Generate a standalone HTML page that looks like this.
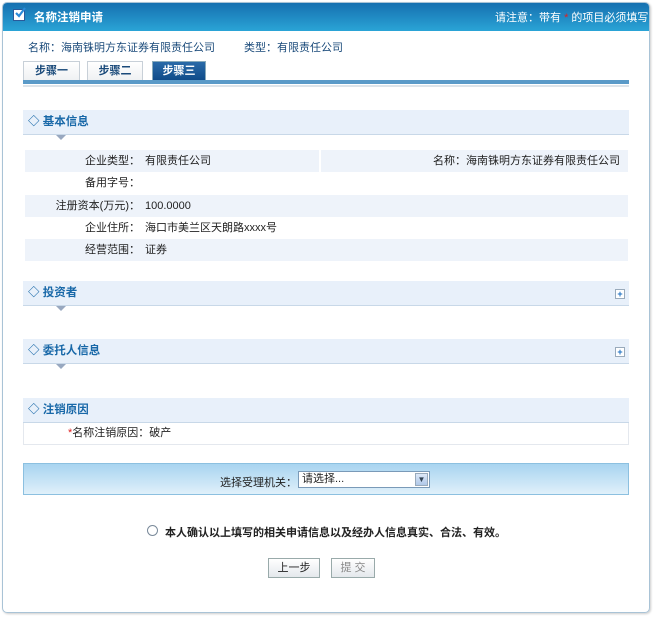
<!DOCTYPE html>
<html><head><meta charset="utf-8"><style>
*{margin:0;padding:0;box-sizing:border-box}
body{width:653px;height:618px;background:#fff;font-family:"Liberation Sans","Noto Sans CJK SC",sans-serif;font-size:11px;color:#222;position:relative;overflow:hidden}
.a{position:absolute}
.panel{left:2px;top:2px;width:648px;height:611px;border:1px solid #a9c3d6;border-radius:5px;box-shadow:1px 1px 2px #ccc}
.hdr{left:3px;top:3px;width:646px;height:28px;background:linear-gradient(#1670b0,#2aa4d6);border-radius:4px 4px 0 0}
.sec{left:23px;width:606px;height:25px;background:#e8f0fa;border-bottom:1px solid #c8d8e8;color:#1868a8;font-weight:bold;font-size:11.5px;line-height:24px;padding-left:5px}
.tri{width:0;height:0;border-left:5px solid transparent;border-right:5px solid transparent;border-top:5px solid #98a8c0}
.row{left:25px;width:603px;height:22px;line-height:22px}
.bg{background:#eef3fa}
.lab{position:absolute;right:488px;text-align:right;white-space:nowrap}
.val{position:absolute;left:120px}
.plus{width:10px;height:10px;border:1px solid #9ab;background:#fff;color:#1a6ec0;font-size:9px;line-height:8px;text-align:center;font-weight:bold}
.tab{top:61px;height:20px;border:1px solid #c8d0d8;border-bottom:none;background:linear-gradient(#fff,#eef0f2);text-align:center;line-height:19px;font-weight:bold;color:#1a4a7a}
.btn{top:558px;height:20px;border:1px solid #9aa;background:linear-gradient(#fff,#e4e8ec);text-align:center;line-height:18px}
</style></head><body>
<div class="a panel"></div>
<div class="a hdr"></div>
<div class="a" style="left:13px;top:9px;width:12px;height:12px;background:#fff;border:1px solid #2a5a9a"></div>
<svg class="a" style="left:13px;top:6px" width="14" height="14" viewBox="0 0 14 14"><path d="M3 7 L6 10 L12 2" stroke="#2a8ad8" stroke-width="2.2" fill="none"/></svg>
<div class="a" style="left:34px;top:9px;color:#fff;font-weight:bold;font-size:11.5px">名称注销申请</div>
<div class="a" style="left:495px;top:9px;color:#fff;font-size:11px">请注意：带有 <span style="color:#e02020">*</span> 的项目必须填写</div>
<div class="a" style="left:28px;top:39px;color:#1a4a7a">名称：海南铢明方东证券有限责任公司</div>
<div class="a" style="left:244px;top:39px;color:#1a4a7a">类型：有限责任公司</div>
<div class="a tab" style="left:23px;width:57px">步骤一</div>
<div class="a tab" style="left:87px;width:56px">步骤二</div>
<div class="a tab" style="left:152px;width:54px;background:linear-gradient(#2a6aa8,#0e4a88);color:#fff;border-color:#8ab">步骤三</div>
<div class="a" style="left:23px;top:80px;width:606px;height:4px;background:#5a9ac8"></div>
<div class="a" style="left:23px;top:85px;width:606px;height:2px;background:#dde4ea"></div>

<div class="a sec" style="top:110px">◇ 基本信息</div>
<div class="a tri" style="left:56px;top:135px"></div>
<div class="a row bg" style="top:150px"><span class="lab">企业类型：</span><span class="val">有限责任公司</span><div class="a" style="left:294px;top:0;width:2px;height:22px;background:#fff"></div><span class="a" style="left:408px">名称：海南铢明方东证券有限责任公司</span></div>
<div class="a row" style="top:172px"><span class="lab">备用字号：</span></div>
<div class="a row bg" style="top:195px"><span class="lab">注册资本(万元)：</span><span class="val">100.0000</span></div>
<div class="a row" style="top:217px"><span class="lab">企业住所：</span><span class="val">海口市美兰区天朗路xxxx号</span></div>
<div class="a row bg" style="top:239px"><span class="lab">经营范围：</span><span class="val">证券</span></div>

<div class="a sec" style="top:281px">◇ 投资者</div>
<div class="a plus" style="left:615px;top:289px">+</div>
<div class="a tri" style="left:56px;top:306px"></div>
<div class="a sec" style="top:339px">◇ 委托人信息</div>
<div class="a plus" style="left:615px;top:347px">+</div>
<div class="a tri" style="left:56px;top:364px"></div>

<div class="a sec" style="top:398px">◇ 注销原因</div>
<div class="a" style="left:23px;top:423px;width:606px;height:22px;border:1px solid #e4e8ee;border-top:none;line-height:20px"><span class="a" style="left:44px"><span style="color:#e02020">*</span>名称注销原因：破产</span></div>

<div class="a" style="left:23px;top:463px;width:606px;height:32px;background:linear-gradient(#a8d4f0,#e0f0fa);border:1px solid #8cc0e0"></div>
<div class="a" style="left:220px;top:474px">选择受理机关：</div>
<div class="a" style="left:298px;top:471px;width:132px;height:17px;border:1px solid #7a9ab8;background:#fff;line-height:15px;padding-left:3px">请选择...</div>
<div class="a" style="left:415px;top:473px;width:13px;height:13px;background:linear-gradient(#dde8f8,#b0c8e8);border:1px solid #9ab;font-size:8px;text-align:center;line-height:11px;color:#345">▼</div>

<div class="a" style="left:147px;top:525px;width:11px;height:11px;border:1px solid #7a8a9a;border-radius:50%;background:#fff"></div>
<div class="a" style="left:165px;top:524px;font-weight:bold">本人确认以上填写的相关申请信息以及经办人信息真实、合法、有效。</div>
<div class="a btn" style="left:268px;width:52px">上一步</div>
<div class="a btn" style="left:331px;width:44px;color:#888">提 交</div>
</body></html>
